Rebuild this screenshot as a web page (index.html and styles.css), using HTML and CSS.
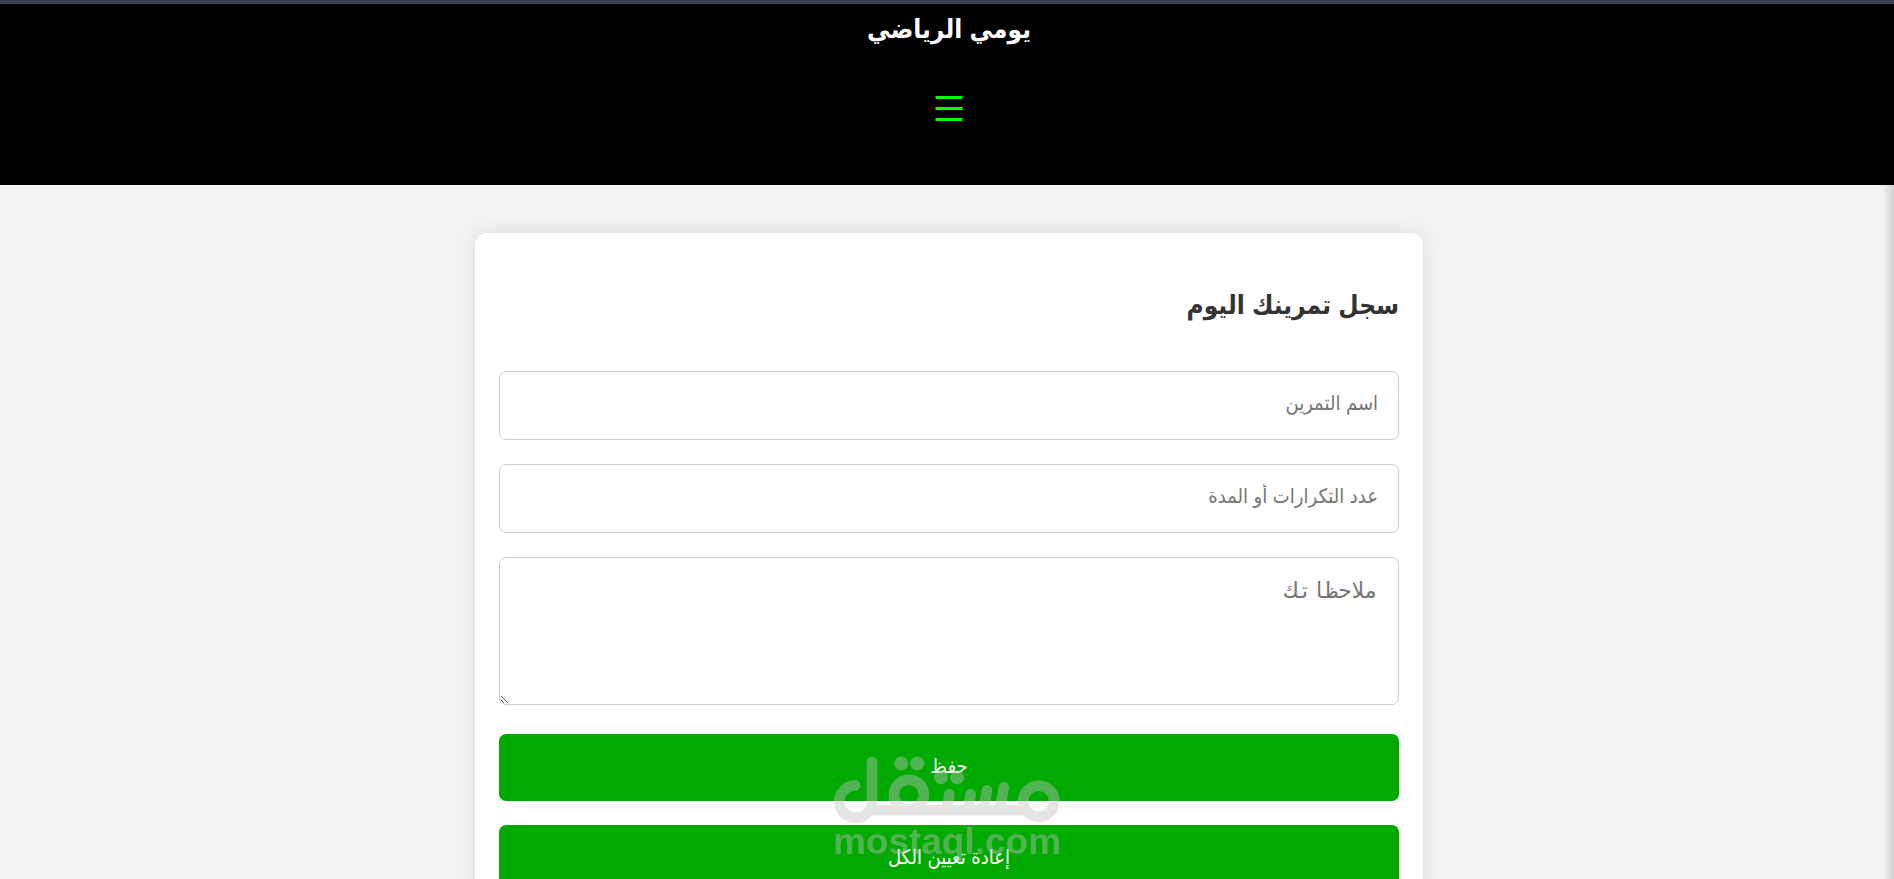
FILE: index.html
```html
<!DOCTYPE html>
<html lang="ar" dir="rtl">
<head>
<meta charset="utf-8">
<title>يومي الرياضي</title>
<link rel="stylesheet" href="styles.css">
</head>
<body>
<header class="header">
  <h1 class="site-title">يومي الرياضي</h1>
  <button class="menu-toggle" type="button" aria-label="القائمة">
    <svg width="28" height="26" viewBox="0 0 28 26"><path d="M0.5 2.5h27M0.5 13.5h27M0.5 24.5h27"/></svg>
  </button>
</header>
<main class="page">
  <form class="card">
    <h2 class="card-title">سجل تمرينك اليوم</h2>
    <input class="field" type="text" placeholder="اسم التمرين" aria-label="اسم التمرين">
    <input class="field" type="text" placeholder="عدد التكرارات أو المدة" aria-label="عدد التكرارات أو المدة">
    <textarea class="field notes" placeholder="ملاحظاتك" aria-label="ملاحظاتك"></textarea>
    <button class="action" type="button">حفظ</button>
    <button class="action" type="button">إعادة تعيين الكل</button>
  </form>
</main>
<div class="edge-shade"></div>
<div class="watermark" dir="ltr">
  <svg class="watermark-logo" viewBox="99 105 681 207" role="img" aria-label="مستقل">
    <g fill="none" stroke="#c1c1c1" stroke-width="32" stroke-linecap="round">
      <path d="M163 196A49 49 0 1 0 206 271H680"/>
      <path d="M214 125V262"/>
      <circle cx="325" cy="224" r="45"/>
      <circle cx="716" cy="244" r="47"/>
      <path d="M447 223L441 265M511 223L504 265M560 211L551 265M611 202L600 265"/>
    </g>
    <g fill="#c1c1c1">
      <circle cx="302" cy="130" r="21"/><circle cx="350" cy="130" r="21"/>
      <circle cx="422" cy="172" r="21"/><circle cx="470" cy="172" r="21"/>
    </g>
  </svg>
  <span class="watermark-text">mostaql.com</span>
</div>
</body>
</html>
```
FILE: styles.css
```css
* {
  box-sizing: border-box;
}

body {
  margin: 0;
  min-height: 100vh;
  background: #f3f3f3;
  color: #333;
  font-family: "Liberation Sans", "DejaVu Sans Condensed", "DejaVu Sans", sans-serif;
}

.header {
  display: flex;
  flex-direction: column;
  align-items: center;
  gap: 36px;
  padding: 5px 0 54px 4px;
  border-top: 4px solid #384052;
  background: #000;
}

.site-title {
  margin: 0;
  color: #fff;
  font-size: 26px;
  line-height: 40px;
}

.menu-toggle {
  padding: 10px;
  border: 0;
  background: none;
  line-height: 0;
}

.menu-toggle svg {
  stroke: #0f0;
  stroke-width: 3;
}

.page {
  padding: 48px 0 48px 4px;
}

.card {
  display: flex;
  flex-direction: column;
  gap: 24px;
  max-width: 948px;
  margin: 0 auto;
  padding: 24px;
  border-radius: 12px;
  background: #fff;
  box-shadow: 0 0 18px rgba(0, 0, 0, 0.1);
}

.card-title {
  margin: 24px 0 18px;
  font-size: 26px;
  line-height: 48px;
}

.field {
  width: 100%;
  height: 69px;
  padding: 14px 20px 18px;
  border: 1px solid #ccc;
  border-radius: 7px;
  background: #fff;
  font-family: inherit;
  font-size: 20px;
}

.field::placeholder {
  color: #757575;
}

.notes {
  height: 148px;
  margin-bottom: 5px;
  padding-top: 20px;
  font-family: "DejaVu Sans Mono", monospace;
  font-size: 22px;
  resize: vertical;
}

.action {
  height: 67px;
  padding: 0 20px 4px;
  border: 0;
  border-radius: 7px;
  background: #0a0;
  color: #fff;
  font-family: inherit;
  font-size: 20px;
}

.edge-shade {
  position: absolute;
  top: 185px;
  right: 0;
  bottom: 0;
  width: 12px;
  background: linear-gradient(to right, transparent, rgba(0, 0, 0, 0.14));
}

.watermark {
  position: fixed;
  bottom: 20px;
  left: 50%;
  display: flex;
  flex-direction: column;
  align-items: center;
  transform: translateX(-50%);
  opacity: 0.42;
  pointer-events: none;
}

.watermark-logo {
  width: 226px;
  height: 69px;
}

.watermark-text {
  color: #c1c1c1;
  font-size: 37px;
  font-weight: bold;
  line-height: 35px;
}
```
